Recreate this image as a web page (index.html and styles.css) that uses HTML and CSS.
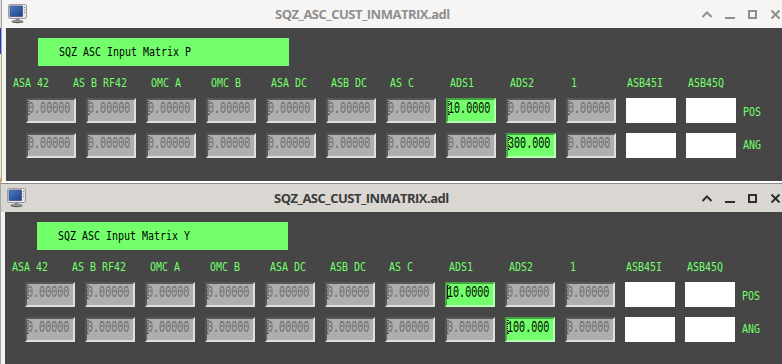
FILE: index.html
```html
<!DOCTYPE html>
<html>
<head>
<meta charset="utf-8">
<title>SQZ_ASC_CUST_INMATRIX.adl</title>
<link rel="stylesheet" href="styles.css">
</head>
<body>
<div class="win win--back">
  <div class="titlebar">
    <svg class="appicon" width="20" height="20" viewBox="0 0 20 20">
      <defs>
        <linearGradient id="scr1" x1="0" y1="0" x2="1" y2="1">
          <stop offset="0" stop-color="#4f7fca"/>
          <stop offset="1" stop-color="#1c3f86"/>
        </linearGradient>
      </defs>
      <rect x="0.5" y="0.5" width="18" height="14" rx="1.5" fill="#e6e6e6" stroke="#9c9c9c"/>
      <rect x="2" y="2" width="12.5" height="10.5" fill="url(#scr1)" stroke="#2a3f6a" stroke-width="0.6"/>
      <rect x="16" y="3" width="1.2" height="1" fill="#8a8a8a"/>
      <rect x="16" y="5.5" width="1.2" height="1" fill="#8a8a8a"/>
      <rect x="16" y="8" width="1.2" height="1" fill="#8a8a8a"/>
      <rect x="7.5" y="14.5" width="4" height="2" fill="#8a8a8a"/>
      <ellipse cx="9.5" cy="17.6" rx="6" ry="1.7" fill="#5e5e5e"/>
      <ellipse cx="9.5" cy="17.1" rx="5" ry="0.9" fill="#9a9a9a"/>
    </svg>
    <span class="title">SQZ_ASC_CUST_INMATRIX.adl</span>
    <svg class="ctrls" width="82" height="28" viewBox="0 0 82 28" fill="none" stroke="currentColor" stroke-width="2">
      <polyline points="2.5,17 7,12.5 11.5,17"/>
      <line x1="25" y1="18" x2="35" y2="18"/>
      <rect x="49" y="11" width="7" height="7"/>
      <line x1="71.5" y1="10.5" x2="79.5" y2="18.5"/>
      <line x1="79.5" y1="10.5" x2="71.5" y2="18.5"/>
    </svg>
  </div>
  <div class="pane">
    <div class="banner"><span class="ftxt">SQZ ASC Input Matrix P</span></div>
    <div class="labels">
      <span class="lbl">ASA 42</span><span class="lbl">AS B RF42</span><span class="lbl">OMC A</span><span class="lbl">OMC B</span><span class="lbl">ASA DC</span><span class="lbl">ASB DC</span><span class="lbl">AS C</span><span class="lbl">ADS1</span><span class="lbl">ADS2</span><span class="lbl">1</span><span class="lbl">ASB45I</span><span class="lbl">ASB45Q</span>
    </div>
    <div class="row">
      <div class="fld"><span class="caret"></span><span class="val">0.00000</span></div>
      <div class="fld"><span class="caret"></span><span class="val">0.00000</span></div>
      <div class="fld"><span class="caret"></span><span class="val">0.00000</span></div>
      <div class="fld"><span class="caret"></span><span class="val">0.00000</span></div>
      <div class="fld"><span class="caret"></span><span class="val">0.00000</span></div>
      <div class="fld"><span class="caret"></span><span class="val">0.00000</span></div>
      <div class="fld"><span class="caret"></span><span class="val">0.00000</span></div>
      <div class="fld fld--on"><span class="caret"></span><span class="val">10.0000</span></div>
      <div class="fld"><span class="caret"></span><span class="val">0.00000</span></div>
      <div class="fld"><span class="caret"></span><span class="val">0.00000</span></div>
      <div class="blank"></div>
      <div class="blank"></div>
      <span class="side">POS</span>
    </div>
    <div class="row">
      <div class="fld"><span class="caret"></span><span class="val">0.00000</span></div>
      <div class="fld"><span class="caret"></span><span class="val">0.00000</span></div>
      <div class="fld"><span class="caret"></span><span class="val">0.00000</span></div>
      <div class="fld"><span class="caret"></span><span class="val">0.00000</span></div>
      <div class="fld"><span class="caret"></span><span class="val">0.00000</span></div>
      <div class="fld"><span class="caret"></span><span class="val">0.00000</span></div>
      <div class="fld"><span class="caret"></span><span class="val">0.00000</span></div>
      <div class="fld"><span class="caret"></span><span class="val">0.00000</span></div>
      <div class="fld fld--on"><span class="caret"></span><span class="val">300.000</span></div>
      <div class="fld"><span class="caret"></span><span class="val">0.00000</span></div>
      <div class="blank"></div>
      <div class="blank"></div>
      <span class="side side--up">ANG</span>
    </div>
  </div>
</div>

<div class="win win--front">
  <div class="titlebar">
    <svg class="appicon" width="20" height="20" viewBox="0 0 20 20">
      <defs>
        <linearGradient id="scr2" x1="0" y1="0" x2="1" y2="1">
          <stop offset="0" stop-color="#4f7fca"/>
          <stop offset="1" stop-color="#1c3f86"/>
        </linearGradient>
      </defs>
      <rect x="0.5" y="0.5" width="18" height="14" rx="1.5" fill="#e6e6e6" stroke="#9c9c9c"/>
      <rect x="2" y="2" width="12.5" height="10.5" fill="url(#scr2)" stroke="#2a3f6a" stroke-width="0.6"/>
      <rect x="16" y="3" width="1.2" height="1" fill="#8a8a8a"/>
      <rect x="16" y="5.5" width="1.2" height="1" fill="#8a8a8a"/>
      <rect x="16" y="8" width="1.2" height="1" fill="#8a8a8a"/>
      <rect x="7.5" y="14.5" width="4" height="2" fill="#8a8a8a"/>
      <ellipse cx="9.5" cy="17.6" rx="6" ry="1.7" fill="#5e5e5e"/>
      <ellipse cx="9.5" cy="17.1" rx="5" ry="0.9" fill="#9a9a9a"/>
    </svg>
    <span class="title">SQZ_ASC_CUST_INMATRIX.adl</span>
    <svg class="ctrls" width="82" height="28" viewBox="0 0 82 28" fill="none" stroke="currentColor" stroke-width="2">
      <polyline points="2.5,17 7,12.5 11.5,17"/>
      <line x1="25" y1="18" x2="35" y2="18"/>
      <rect x="49" y="11" width="7" height="7"/>
      <line x1="71.5" y1="10.5" x2="79.5" y2="18.5"/>
      <line x1="79.5" y1="10.5" x2="71.5" y2="18.5"/>
    </svg>
  </div>
  <div class="pane">
    <div class="banner"><span class="ftxt">SQZ ASC Input Matrix Y</span></div>
    <div class="labels">
      <span class="lbl">ASA 42</span><span class="lbl">AS B RF42</span><span class="lbl">OMC A</span><span class="lbl">OMC B</span><span class="lbl">ASA DC</span><span class="lbl">ASB DC</span><span class="lbl">AS C</span><span class="lbl">ADS1</span><span class="lbl">ADS2</span><span class="lbl">1</span><span class="lbl">ASB45I</span><span class="lbl">ASB45Q</span>
    </div>
    <div class="row">
      <div class="fld"><span class="caret"></span><span class="val">0.00000</span></div>
      <div class="fld"><span class="caret"></span><span class="val">0.00000</span></div>
      <div class="fld"><span class="caret"></span><span class="val">0.00000</span></div>
      <div class="fld"><span class="caret"></span><span class="val">0.00000</span></div>
      <div class="fld"><span class="caret"></span><span class="val">0.00000</span></div>
      <div class="fld"><span class="caret"></span><span class="val">0.00000</span></div>
      <div class="fld"><span class="caret"></span><span class="val">0.00000</span></div>
      <div class="fld fld--on"><span class="caret caret--solid"></span><span class="val">10.0000</span></div>
      <div class="fld"><span class="caret"></span><span class="val">0.00000</span></div>
      <div class="fld"><span class="caret"></span><span class="val">0.00000</span></div>
      <div class="blank"></div>
      <div class="blank"></div>
      <span class="side">POS</span>
    </div>
    <div class="row">
      <div class="fld"><span class="caret"></span><span class="val">0.00000</span></div>
      <div class="fld"><span class="caret"></span><span class="val">0.00000</span></div>
      <div class="fld"><span class="caret"></span><span class="val">0.00000</span></div>
      <div class="fld"><span class="caret"></span><span class="val">0.00000</span></div>
      <div class="fld"><span class="caret"></span><span class="val">0.00000</span></div>
      <div class="fld"><span class="caret"></span><span class="val">0.00000</span></div>
      <div class="fld"><span class="caret"></span><span class="val">0.00000</span></div>
      <div class="fld"><span class="caret"></span><span class="val">0.00000</span></div>
      <div class="fld fld--on"><span class="caret"></span><span class="val">100.000</span></div>
      <div class="fld"><span class="caret"></span><span class="val">0.00000</span></div>
      <div class="blank"></div>
      <div class="blank"></div>
      <span class="side side--up">ANG</span>
    </div>
  </div>
</div>
</body>
</html>
```

FILE: styles.css
```css
* { box-sizing: border-box; }

html, body { margin: 0; padding: 0; }

body {
  width: 782px;
  height: 364px;
  overflow: hidden;
  font-family: "DejaVu Sans Mono", "Liberation Mono", monospace;
  background: linear-gradient(to bottom,
    #dcdcdc 0 28px,
    #1f33d8 28px 54px,
    #e9ecc2 54px 178px,
    #e8a33a 178px 206px,
    #d4d4d4 206px);
}

.win {
  border-left: 1px solid #a9a7a4;
  background: #f3f3f2;
}

.win--back {
  margin-left: 1px;
  border-bottom: 2px solid #ffffff;
}

.win--front {
  border-top: 1px solid #8f8c88;
}

.titlebar {
  height: 28px;
  display: flex;
  align-items: flex-start;
  padding-left: 6px;
  font-family: "Open Sans", "Noto Sans", sans-serif;
}

.win--back .titlebar { background: #f6f5f4; color: #8e8e8e; }
.win--front .titlebar { background: #dad7d3; color: #2e2e2e; }

.appicon {
  display: block;
  margin-top: 4px;
  flex: none;
}

.title {
  margin-left: 247px;
  font-weight: 700;
  font-size: 13px;
  letter-spacing: -0.5px;
  line-height: 28px;
  white-space: nowrap;
}

.win--back .title { color: #8f8f8f; }
.win--front .title { color: #3b3b3b; }

.ctrls {
  display: block;
  margin-left: auto;
  flex: none;
}

.pane {
  margin-left: 4px;
  background: #464646;
  padding-top: 10px;
}

.win--back .pane { height: 153px; }
.win--front .pane { height: 152px; }

.banner {
  margin-left: 32px;
  width: 251px;
  height: 28px;
  background: #73ff6b;
  padding: 1px 0 0 21px;
  line-height: 27px;
  font-size: 12px;
  color: #000;
}

.ftxt,
.lbl,
.side,
.val {
  display: inline-block;
  white-space: pre;
  transform-origin: 0 50%;
}

.ftxt,
.lbl,
.side {
  transform: scaleX(0.83);
}

.labels {
  display: grid;
  grid-template-columns: 60px 78px 60px 60px 60px 59px 60px 60px 61px 56px 61px auto;
  padding-left: 7px;
  margin-top: 11px;
  height: 12px;
  font-size: 12px;
  line-height: 12px;
  color: #73ff6b;
}

.row {
  display: flex;
  align-items: flex-start;
  gap: 10px;
  padding-left: 20px;
  margin-top: 9px;
}

.row + .row { margin-top: 10px; }

.fld {
  position: relative;
  width: 50px;
  height: 25px;
  flex: none;
  background: #aeaeae;
  border: 2px solid;
  border-color: #575757 #dedede #dedede #575757;
  font-family: "Liberation Mono", "DejaVu Sans Mono", monospace;
  font-size: 16px;
  line-height: 19px;
  color: #6a6a6a;
  overflow: hidden;
}

.fld--on {
  background: #73ff6b;
  border-color: #45a441 #b9ffb5 #b9ffb5 #45a441;
  color: #000;
}

.val {
  transform: scaleX(0.63);
}

.caret {
  position: absolute;
  left: -1px;
  top: 1px;
  width: 3px;
  height: 14px;
  color: #5a5a5a;
  background:
    linear-gradient(currentColor, currentColor) left top / 3px 1px no-repeat,
    linear-gradient(currentColor, currentColor) left bottom / 3px 1px no-repeat,
    repeating-linear-gradient(to bottom, currentColor 0 1px, transparent 1px 2px) 1px 0 / 1px 100% no-repeat;
}

.fld--on .caret { color: #1a1a1a; }

.caret--solid {
  background:
    linear-gradient(currentColor, currentColor) left top / 3px 1px no-repeat,
    linear-gradient(currentColor, currentColor) left bottom / 3px 1px no-repeat,
    linear-gradient(currentColor, currentColor) 1px 0 / 1px 100% no-repeat;
}

.blank {
  width: 50px;
  height: 25px;
  flex: none;
  background: #ffffff;
}

.side {
  margin-left: -3px;
  margin-top: 8px;
  font-size: 12px;
  line-height: 12px;
  color: #73ff6b;
}

.side--up { margin-top: 6px; }
```
